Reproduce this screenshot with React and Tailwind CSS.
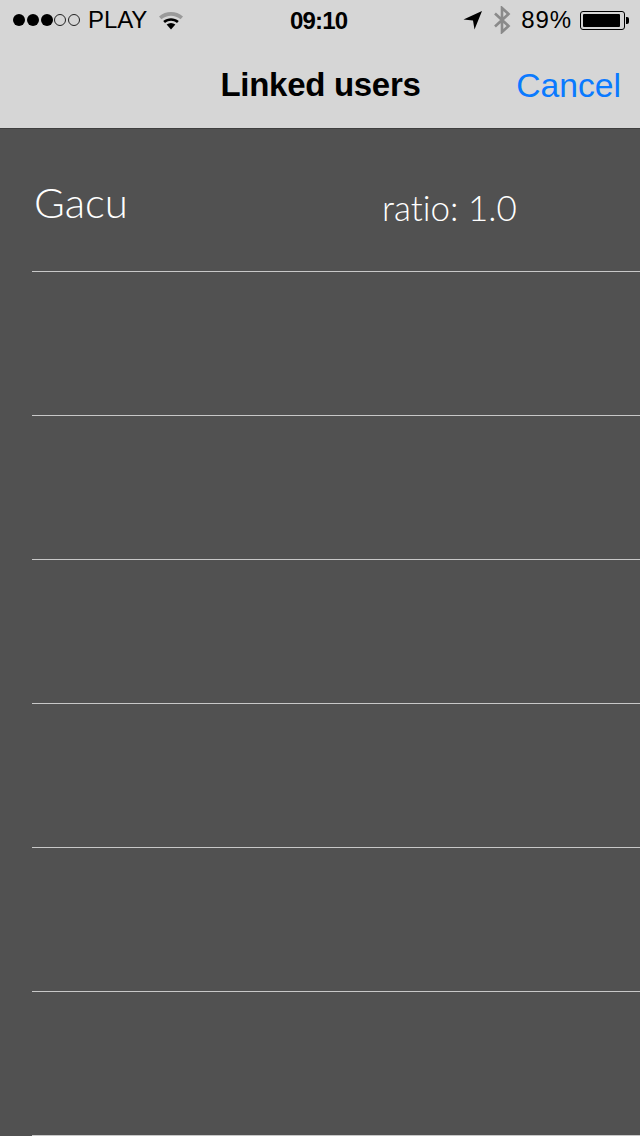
import React from 'react';

const rows = [
  { name: 'Gacu', ratio: 'ratio: 1.0' },
  {}, {}, {}, {}, {}, {},
];

const Signal = () => (
  <div className="flex items-center gap-[1.75px]">
    {[1, 1, 1, 0, 0].map((on, i) => (
      <span key={i} className={`w-[12px] h-[12px] rounded-full ${on ? 'bg-black' : 'border border-[#222]'}`} />
    ))}
  </div>
);

const Wifi = () => (
  <svg width="26" height="20" viewBox="0 0 26 20" className="ml-[11px]">
    <path d="M1 6.5C8 0.6 18 0.6 25 6.5L22.6 9.3C17 4.6 9 4.6 3.4 9.3Z" fill="#9a9a9a" />
    <path d="M5.2 11C10 7.2 16 7.2 20.8 11L19 13C15 10 11 10 7 13Z" fill="#000" />
    <path d="M8.6 14.6C11.4 12.6 14.6 12.6 17.4 14.6L13 19.5Z" fill="#000" />
  </svg>
);

const Location = () => (
  <svg width="20" height="20" viewBox="0 0 20 20">
    <path d="M0.5 9.5L19 1L11.5 19.5L10 10.5Z" fill="#000" />
  </svg>
);

const Bluetooth = () => (
  <svg width="18" height="28" viewBox="0 0 18 28" fill="none" stroke="#8a8a8a" strokeWidth="2.6">
    <path d="M2 7.5L15.5 20L9 26V2L15.5 8L2 20.5" />
  </svg>
);

const Battery = () => (
  <div className="flex items-center">
    <div className="w-[45px] h-[19px] rounded-[3px] border border-black p-[2px]">
      <div className="w-[37px] h-full bg-black rounded-[1px]" />
    </div>
    <div className="w-[3px] h-[7px] bg-black rounded-r-[2px] ml-[1px]" />
  </div>
);

export default function App() {
  return (
    <div className="w-[640px] h-[1136px] overflow-hidden bg-[#515151] font-['Liberation_Sans',Arial,sans-serif]">
      {/* Header */}
      <div className="h-[128px] bg-[#d6d6d6] relative shadow-[0_1px_0_#3f3f3f]">
        <div className="h-[40px] relative flex items-center justify-between pl-[13px] pr-[11px] text-black text-[24px]">
          <div className="flex items-center">
            <Signal />
            <span className="ml-[8px] tracking-[-0.1px]">PLAY</span>
            <Wifi />
          </div>
          <span className="absolute left-[290px] top-[6px] font-bold text-[24px] tracking-[-0.8px] leading-[30px]">09:10</span>
          <div className="flex items-center">
            <Location />
            <div className="ml-[10px]"><Bluetooth /></div>
            <span className="ml-[10px] mr-[8px] tracking-[0.9px]">89%</span>
            <Battery />
          </div>
        </div>
        <div className="h-[88px] relative flex items-center justify-center pt-[2px]">
          <span className="text-[33px] font-bold text-black tracking-[-0.3px] ml-[1px]">Linked users</span>
          <span className="absolute right-[19px] top-[23px] text-[33.7px] leading-[44px] text-[#0a7aff]">Cancel</span>
        </div>
      </div>

      {/* List */}
      <div className="font-['Lato',sans-serif] font-light text-white [font-variant-ligatures:none]">
        {rows.map((row, i) => (
          <div key={i} className="h-[144px] pl-[32px]">
            <div className="h-full border-b border-[#c8c8c8] relative">
              {row.name && <span className="absolute left-[2px] top-[48px] text-[42px] leading-[52px]">{row.name}</span>}
              {row.ratio && <span className="absolute left-[350px] top-[58px] text-[35px] leading-[42px]">{row.ratio}</span>}
            </div>
          </div>
        ))}
      </div>
    </div>
  );
}
